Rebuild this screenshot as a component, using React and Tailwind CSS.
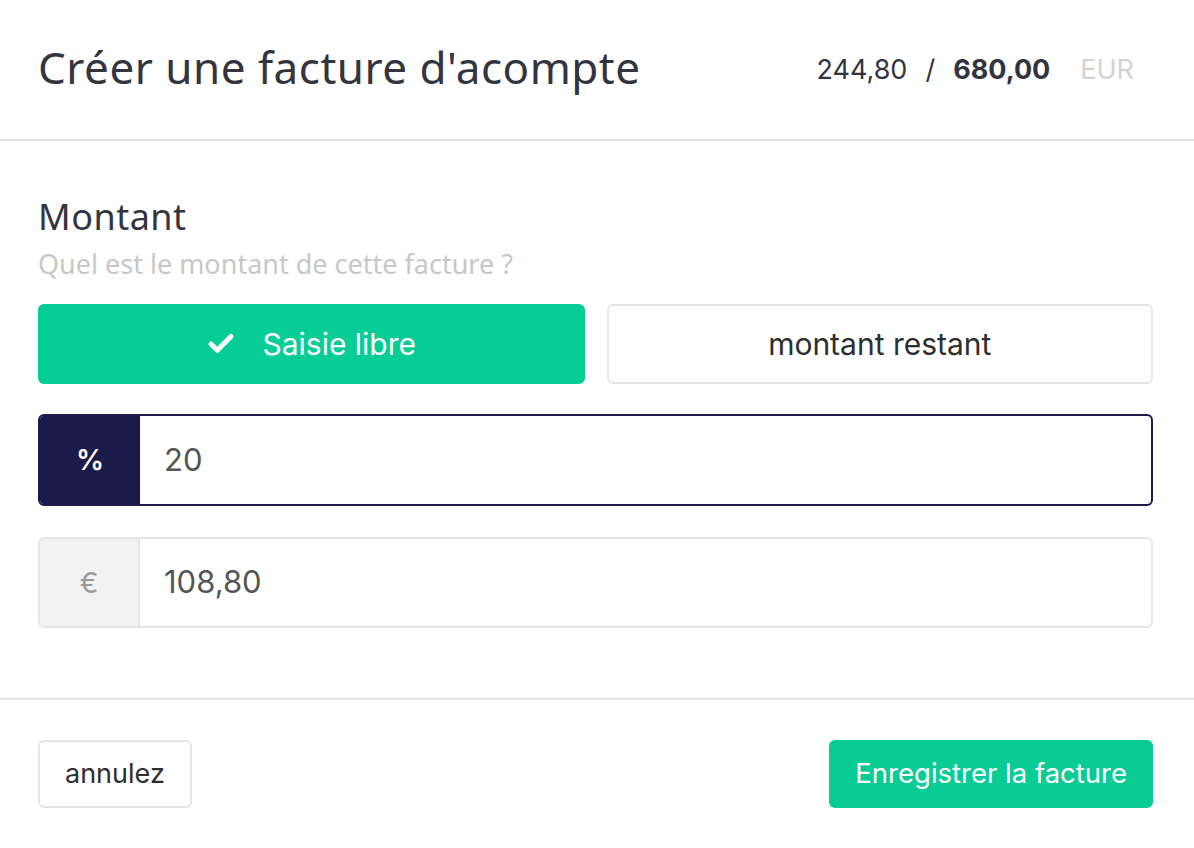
import { Check } from 'lucide-react';

const App = () => {
  return (
    <div className="w-[1194px] h-[848px] bg-white font-['Inter',sans-serif] overflow-hidden">
      {/* Header */}
      <div className="h-[141px] flex items-center justify-between pl-[38px] pr-[60px] border-b-2 border-[#e6e6e6]">
        <h1 className="text-[44px] font-['Noto_Sans',sans-serif] text-[#34343f] tracking-[0.5px] -mt-[6px]">
          Créer une facture d'acompte
        </h1>
        <div className="flex items-center gap-[18px] text-[27px] text-[#34343f] mt-[2px]">
          <span>244,80</span>
          <span>/</span>
          <span className="font-bold">680,00</span>
          <span className="text-[#d3d3d3] ml-[12px]">EUR</span>
        </div>
      </div>

      {/* Body */}
      <div className="pl-[38px] pr-[41px] pt-[56px] h-[559px] border-b-2 border-[#e6e6e6]">
        <h2 className="text-[36px] leading-[40px] font-['Noto_Sans',sans-serif] text-[#34343f] tracking-[0.5px]">Montant</h2>
        <p className="text-[27px] leading-[34px] mt-[10px] font-['Noto_Sans',sans-serif] text-[#c8c8c8]">
          Quel est le montant de cette facture ?
        </p>

        <div className="grid grid-cols-2 gap-[22px] mt-[23px]">
          <button className="h-[80px] rounded-[6px] bg-[#06cd95] text-white text-[30px] flex items-center justify-center gap-[26px]">
            <Check className="w-[30px] h-[30px]" strokeWidth={4} />
            Saisie libre
          </button>
          <button className="h-[80px] rounded-[6px] border-2 border-[#e6e6e6] text-[#2e2e2e] text-[30px] flex items-center justify-center">
            montant restant
          </button>
        </div>

        <div className="mt-[30px] h-[92px] flex rounded-[6px] border-2 border-[#1c1a48] overflow-hidden">
          <div className="w-[100px] bg-[#1c1a48] text-white text-[28px] font-semibold flex items-center justify-center">%</div>
          <div className="flex-1 flex items-center pl-[24px] text-[31px] text-[#555555]">20</div>
        </div>

        <div className="mt-[31px] h-[91px] flex rounded-[6px] border-2 border-[#e6e6e6] overflow-hidden">
          <div className="w-[100px] bg-[#f2f2f2] border-r-2 border-[#e6e6e6] text-[#9a9a9a] text-[28px] flex items-center justify-center">€</div>
          <div className="flex-1 flex items-center pl-[24px] text-[31px] text-[#555555]">108,80</div>
        </div>
      </div>

      {/* Footer */}
      <div className="pl-[38px] pr-[41px] pt-[40px] flex justify-between items-start">
        <button className="h-[68px] px-[25px] rounded-[6px] border-2 border-[#e6e6e6] text-[27px] text-[#2e2e2e]">
          annulez
        </button>
        <button className="h-[68px] px-[26px] rounded-[6px] bg-[#08cc94] text-white text-[27.5px]">
          Enregistrer la facture
        </button>
      </div>
    </div>
  );
};

export default App;
